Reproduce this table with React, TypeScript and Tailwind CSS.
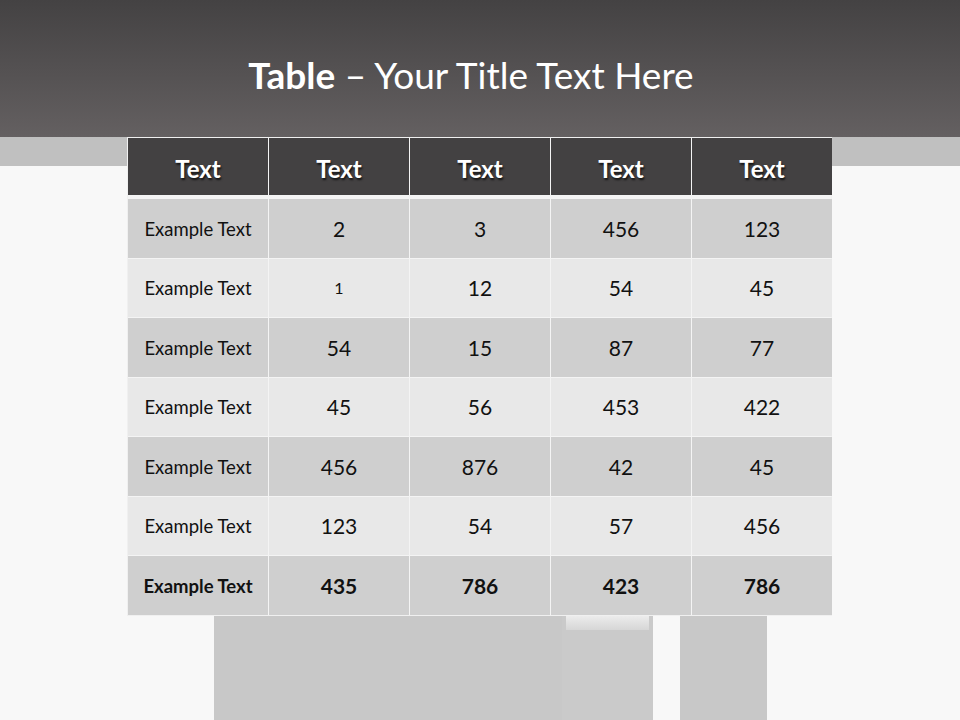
import React from 'react';

const rows: string[][] = [
  ['Example Text', '2', '3', '456', '123'],
  ['Example Text', '1', '12', '54', '45'],
  ['Example Text', '54', '15', '87', '77'],
  ['Example Text', '45', '56', '453', '422'],
  ['Example Text', '456', '876', '42', '45'],
  ['Example Text', '123', '54', '57', '456'],
  ['Example Text', '435', '786', '423', '786'],
];

const font = { fontFamily: 'Lato, "Open Sans", sans-serif' };

export default function App() {
  return (
    <div className="w-[960px] h-[720px] bg-[#f8f8f8] overflow-hidden" style={font}>
      {/* title band */}
      <div className="h-[137px] bg-gradient-to-b from-[#444243] to-[#646061] flex justify-center pt-[51px] pr-[18px]">
        <h1 className="text-[37px] leading-[48px] text-white">
          <span className="font-bold">Table</span> – Your Title Text Here
        </h1>
      </div>
      <div className="h-[29px] bg-[#c0c0c0]" />

      {/* table */}
      <div className="relative -mt-[29px] ml-[127px] w-[705px] bg-[#f0f0f0] p-px">
        <div className="grid grid-cols-[140px_140px_140px_140px_140px] gap-x-px bg-[#f4f4f4]">
          {['Text', 'Text', 'Text', 'Text', 'Text'].map((h, i) => (
            <div
              key={i}
              className="h-[57px] pt-[5px] bg-[#434142] flex items-center justify-center text-white font-bold text-[24px] [text-shadow:1px_2px_2px_rgba(0,0,0,0.7)]"
            >
              {h}
            </div>
          ))}
        </div>
        <div className="h-[4px] bg-[#f4f4f4]" />
        <div className="grid grid-cols-[140px_140px_140px_140px_140px] gap-px bg-[#f4f4f4]">
          {rows.map((r, ri) =>
            r.map((c, ci) => {
              const last = ri === rows.length - 1;
              const bg = ri % 2 === 0 ? 'bg-[#cfcfcf]' : 'bg-[#e8e8e8]';
              let size = ci === 0 ? 'text-[18.5px] pt-[3px]' : 'text-[21px]';
              if (ri === 1 && ci === 1) size = 'text-[16px]';
              return (
                <div
                  key={ri + '-' + ci}
                  className={
                    'h-[58.5px] flex items-center justify-center text-[#111] ' +
                    bg +
                    ' ' +
                    size +
                    (last ? ' font-bold' : '')
                  }
                >
                  {c}
                </div>
              );
            })
          )}
        </div>
      </div>

      {/* background photo remnants */}
      <div className="flex pl-[214px] h-[104px]">
        <div className="w-[439px] bg-[#c8c8c8] flex justify-end">
          <div className="w-[91px] h-full bg-[#cacaca] flex flex-col">
            <div className="h-[14px] mx-[4px] bg-gradient-to-b from-[#ececec] to-[#d6d6d6]" />
          </div>
        </div>
        <div className="w-[27px]" />
        <div className="w-[87px] bg-[#c8c8c8]" />
      </div>
    </div>
  );
}
